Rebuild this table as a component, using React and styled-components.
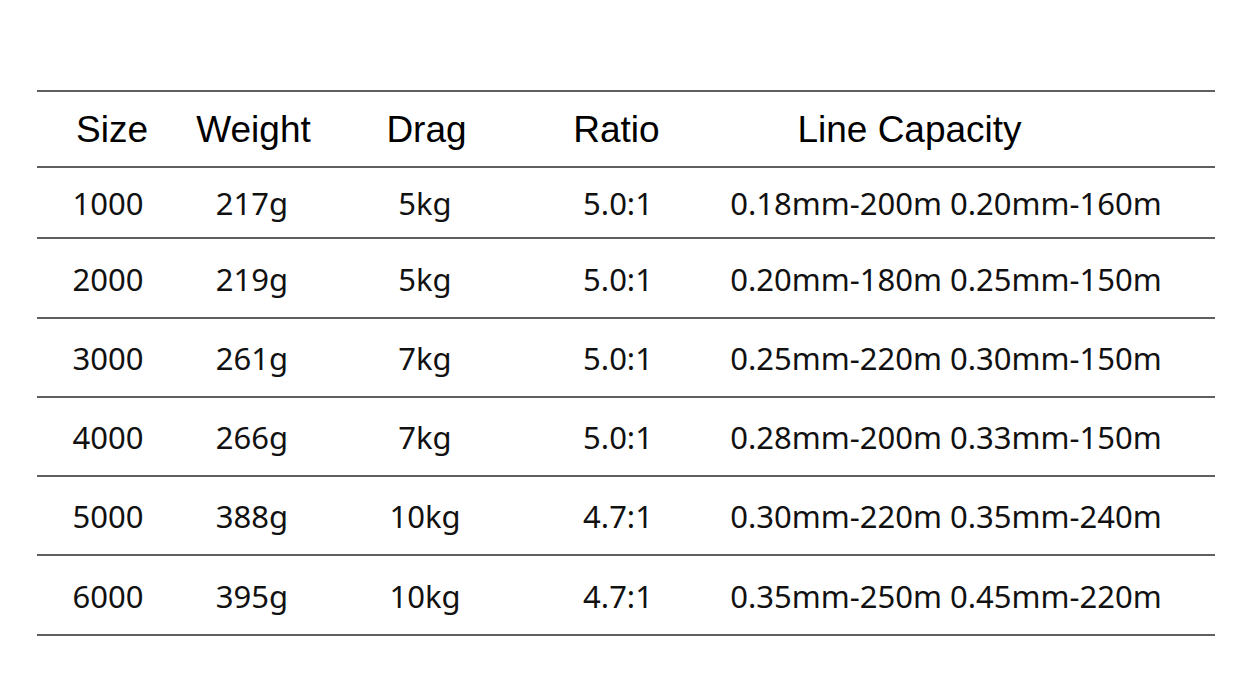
import React from "react";
import styled, { createGlobalStyle } from "styled-components";

const GlobalStyle = createGlobalStyle`
  html, body {
    margin: 0;
    padding: 0;
    background: #ffffff;
  }
`;

const columns = ["Size", "Weight", "Drag", "Ratio", "Line Capacity"];

const specs = [
    { size: "1000", weight: "217g", drag: "5kg", ratio: "5.0:1", line: "0.18mm-200m 0.20mm-160m", h: 71 },
    { size: "2000", weight: "219g", drag: "5kg", ratio: "5.0:1", line: "0.20mm-180m 0.25mm-150m", h: 80 },
    { size: "3000", weight: "261g", drag: "7kg", ratio: "5.0:1", line: "0.25mm-220m 0.30mm-150m", h: 79 },
    { size: "4000", weight: "266g", drag: "7kg", ratio: "5.0:1", line: "0.28mm-200m 0.33mm-150m", h: 79 },
    { size: "5000", weight: "388g", drag: "10kg", ratio: "4.7:1", line: "0.30mm-220m 0.35mm-240m", h: 79 },
    { size: "6000", weight: "395g", drag: "10kg", ratio: "4.7:1", line: "0.35mm-250m 0.45mm-220m", h: 80 },
];

// header labels are not quite centred over the values (px the centre moves)
const headerShift = [4, 1.5, 1.5, -1.5, -36.5];

const Page = styled.div`
    width: 1250px;
    height: 693px;
    padding: 90px 35px 0 37px;
    box-sizing: border-box;
    overflow: hidden;
`;

const Table = styled.div`
    border-top: 2px solid #5f5f5f;
`;

const Row = styled.div`
    display: grid;
    grid-template-columns: 142px 146px 200px 186px 470px 1fr;
    height: ${({ h }) => h}px;
    box-sizing: border-box;
    border-bottom: 2px solid #5f5f5f;
    align-items: center;
`;

const HeadCell = styled.div`
    font-family: "Liberation Sans", Arial, sans-serif;
    font-size: 37px;
    line-height: 1;
    color: #000;
    text-align: center;
    padding-left: ${({ shift }) => (shift > 0 ? shift * 2 : 0)}px;
    padding-right: ${({ shift }) => (shift < 0 ? -shift * 2 : 0)}px;
    white-space: nowrap;
`;

const Cell = styled.div`
    font-family: "Noto Sans", "Open Sans", sans-serif;
    font-size: 31px;
    line-height: 1;
    color: #111;
    text-align: center;
    white-space: nowrap;
    padding-top: 2px;
`;

export default function App() {
    return (
        <>
            <GlobalStyle />
            <Page>
                <Table>
                    <Row h={76}>
                        {columns.map((c, i) => (
                            <HeadCell key={c} shift={headerShift[i]}>{c}</HeadCell>
                        ))}
                    </Row>
                    {specs.map((s) => (
                        <Row key={s.size} h={s.h}>
                            <Cell>{s.size}</Cell>
                            <Cell>{s.weight}</Cell>
                            <Cell>{s.drag}</Cell>
                            <Cell>{s.ratio}</Cell>
                            <Cell>{s.line}</Cell>
                        </Row>
                    ))}
                </Table>
            </Page>
        </>
    );
}
